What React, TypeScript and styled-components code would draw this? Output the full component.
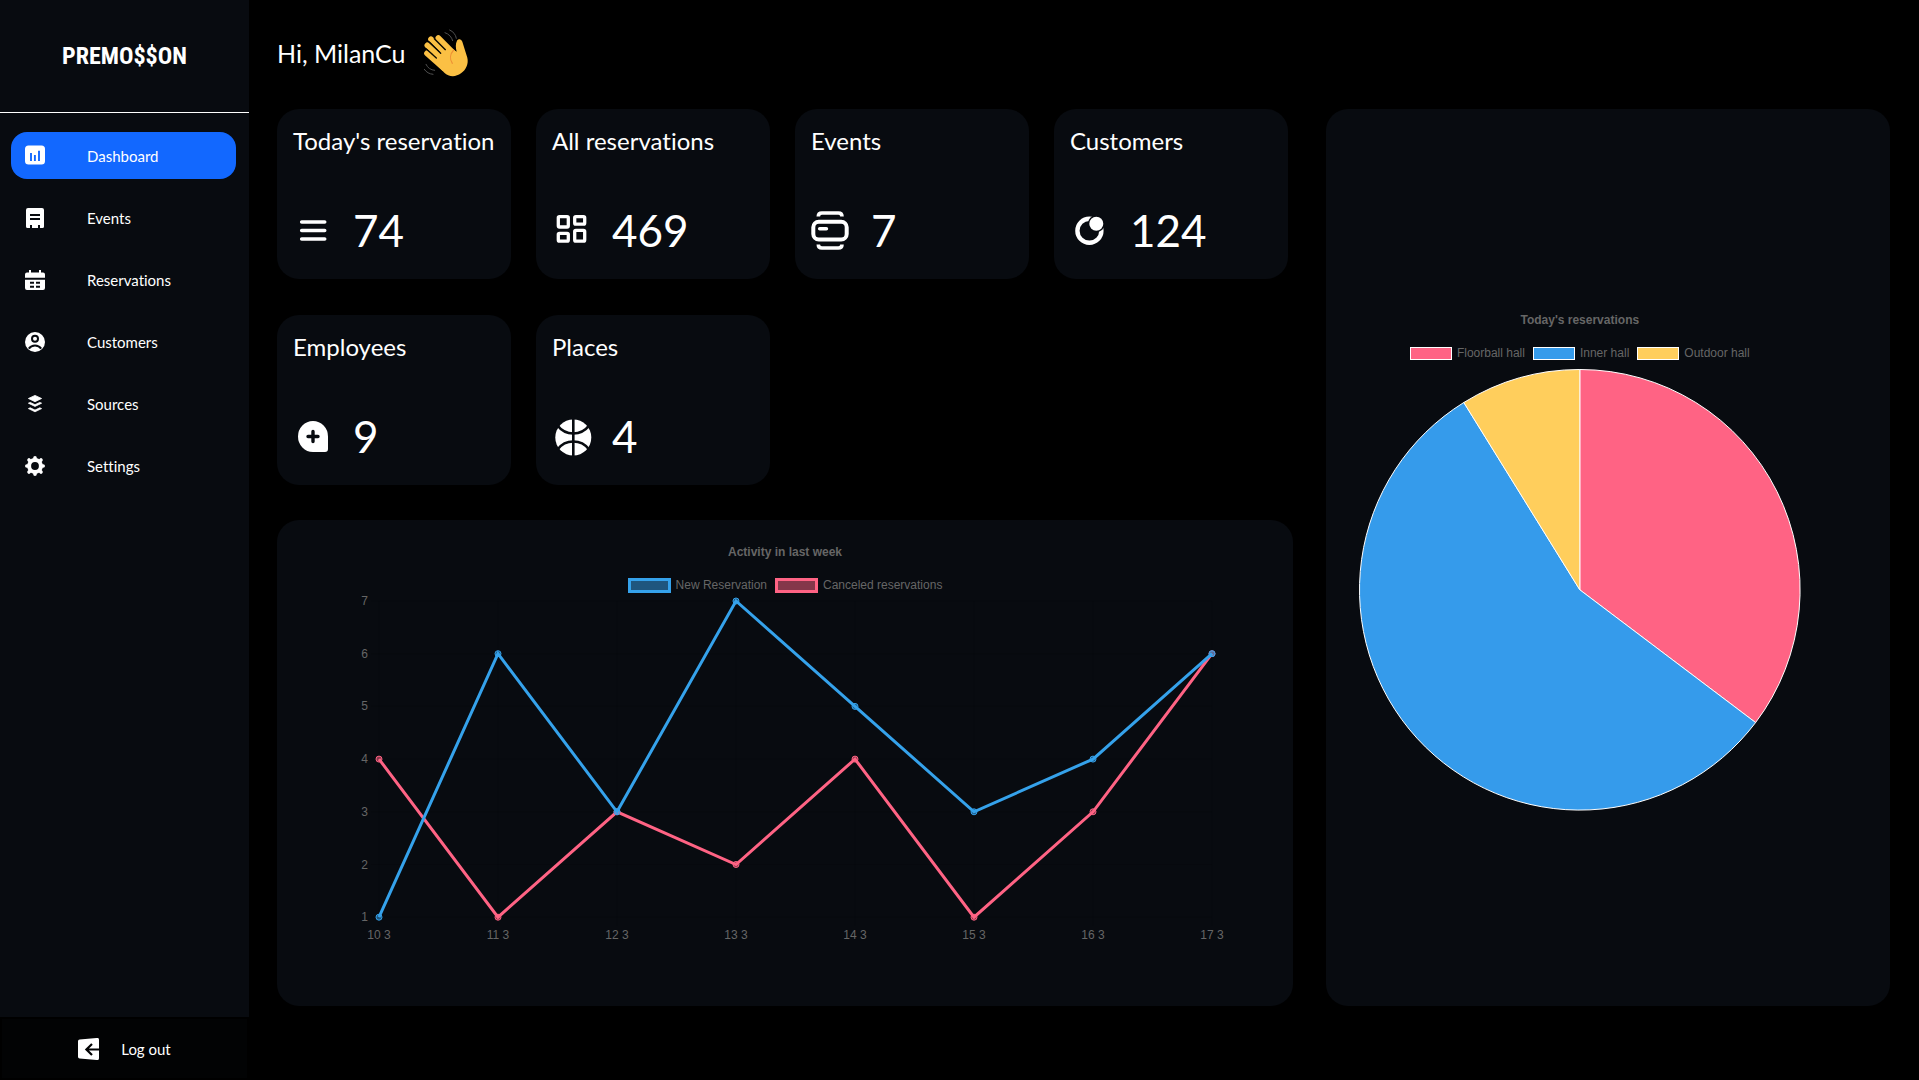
import React from "react";
import styled, { createGlobalStyle } from "styled-components";

const color = {
  page: "#000000",
  panel: "#080b10",
  accent: "#1268ff",
  text: "#ffffff",
  muted: "#666666",
  blue: "rgb(53, 162, 235)",
  pink: "rgb(255, 99, 132)",
};

const GlobalStyle = createGlobalStyle`
  *, *::before, *::after { box-sizing: border-box; }
  body {
    margin: 0;
    background: ${color.page};
    color: ${color.text};
    font-family: Lato, "Open Sans", sans-serif;
    font-variant-ligatures: none;
  }
`;

/* ---------- layout ---------- */

const Page = styled.div`
  display: flex;
  min-height: 100vh;
`;

const Sidebar = styled.aside`
  display: flex;
  flex-direction: column;
  flex: none;
  width: 249px;
  background: ${color.panel};
`;

const Brand = styled.div`
  display: flex;
  align-items: center;
  justify-content: center;
  height: 113px;
  border-bottom: 1px solid #fff;
  font-family: "Liberation Sans Narrow", "Roboto Condensed", "DejaVu Sans Condensed", sans-serif;
  font-size: 24px;
  font-weight: 700;
  line-height: 28px;
`;

const Nav = styled.nav`
  display: flex;
  flex-direction: column;
  flex: 1;
  gap: 15px;
  padding: 19px 13px 19px 11px;
`;

const NavLink = styled.a<{ $active?: boolean }>`
  display: flex;
  align-items: center;
  gap: 42px;
  height: 47px;
  padding: 0 14px;
  border-radius: 16px;
  background: ${(p) => (p.$active ? color.accent : "transparent")};
  color: ${color.text};
  font-size: 15px;
  line-height: 20px;
  text-decoration: none;
`;

const NavIcon = styled.svg`
  flex: none;
  width: 20px;
  height: 20px;
  overflow: visible;
`;

const LogoutButton = styled.button`
  display: flex;
  align-items: center;
  justify-content: center;
  gap: 22px;
  height: 63px;
  border: 2px solid #000;
  background: #020304;
  color: ${color.text};
  font-family: inherit;
  font-size: 15px;
  line-height: 20px;
  cursor: pointer;
`;

const LogoutIcon = styled.svg`
  width: 21px;
  height: 22px;
`;

const Main = styled.main`
  flex: 1;
  min-width: 0;
  padding: 0 29px 74px 28px;
`;

const Greeting = styled.header`
  display: flex;
  align-items: center;
  gap: 18px;
  height: 109px;
  padding-bottom: 4px;
`;

const GreetingText = styled.h1`
  margin: 0;
  font-size: 25px;
  font-weight: 400;
  line-height: 32px;
`;

const WaveIcon = styled.svg`
  width: 46px;
  height: 50px;
`;

const Board = styled.div`
  display: grid;
  grid-template-columns: minmax(0, 1016fr) minmax(0, 564fr);
  gap: 33px;
`;

const Overview = styled.div`
  display: flex;
  flex-direction: column;
  gap: 35px;
`;

const StatGrid = styled.section`
  display: grid;
  grid-template-columns: repeat(4, minmax(0, 1fr));
  gap: 36px 25px;
  padding-right: 5px;
`;

/* ---------- stat cards ---------- */

const StatCard = styled.article`
  display: flex;
  flex-direction: column;
  justify-content: space-between;
  min-height: 170px;
  padding: 18px 16px 25px;
  border-radius: 22px;
  background: ${color.panel};
`;

const StatTitle = styled.h2`
  margin: 0;
  font-size: 24px;
  font-weight: 400;
  line-height: 28px;
  white-space: nowrap;
`;

const StatRow = styled.div`
  display: flex;
  align-items: center;
  gap: 20px;
`;

const StatIcon = styled.svg`
  flex: none;
  width: 40px;
  height: 40px;
`;

const StatValue = styled.span`
  font-size: 44px;
  line-height: 48px;
`;

/* ---------- charts ---------- */

const Panel = styled.section`
  border-radius: 22px;
  background: ${color.panel};
  color: ${color.muted};
  font-family: "Liberation Sans", Arial, sans-serif;
  font-size: 12px;
  line-height: 16px;
`;

const ActivityPanel = styled(Panel)`
  padding: 24px 68px 58px;
`;

const PiePanel = styled(Panel)`
  display: flex;
  align-items: center;
`;

const PieArea = styled.div`
  display: flex;
  flex-direction: column;
  align-items: center;
  width: 90%;
  padding-top: 8px;
`;

const ChartTitle = styled.h3`
  margin: 0 0 17px;
  font-size: 12px;
  font-weight: 700;
  line-height: 16px;
  text-align: center;
`;

const Legend = styled.ul`
  display: flex;
  flex-wrap: wrap;
  justify-content: center;
  gap: 8px;
  margin: 0;
  padding: 0;
  list-style: none;
`;

const LegendItem = styled.li`
  display: flex;
  align-items: center;
  gap: 5px;
`;

const Swatch = styled.span<{ $fill: string; $line: string; $thick?: boolean }>`
  width: ${(p) => (p.$thick ? 43 : 42)}px;
  height: ${(p) => (p.$thick ? 15 : 13)}px;
  border: ${(p) => (p.$thick ? 3 : 1)}px solid ${(p) => p.$line};
  background: ${(p) => p.$fill};
`;

const LinePlot = styled.svg`
  display: block;
  width: 100%;
  height: auto;
  overflow: visible;
`;

const AxisLabel = styled.text`
  fill: ${color.muted};
  font-size: 12px;
`;

const PiePlot = styled.svg`
  display: block;
  width: 87%;
  height: auto;
  margin-top: 8px;
`;

/* ---------- icons ---------- */

const DashboardIcon = () => (
  <NavIcon viewBox="0 0 20 20" aria-hidden="true">
    <rect y="-0.5" width="20" height="19" rx="3.5" fill="#fff" />
    <path d="M6 7v8M9.900 9v6M14 4.800v10.200" stroke={color.accent} strokeWidth="1.900" />
  </NavIcon>
);

const EventsIcon = () => (
  <NavIcon viewBox="0 0 20 20" aria-hidden="true">
    <path
      fill="#fff"
      fillRule="evenodd"
      d="M3 0h14a2 2 0 0 1 2 2v16.500a1.500 1.500 0 0 1-1.500 1.500H15v-3h-2v3H7v-3H5v3H2.500A1.500 1.500 0 0 1 1 18.500V2a2 2 0 0 1 2-2zM5 6v2h10V6zM5 10v2h10v-2z"
    />
  </NavIcon>
);

const CalendarIcon = () => (
  <NavIcon viewBox="0 0 20 20" aria-hidden="true">
    <path
      fill="#fff"
      fillRule="evenodd"
      d="M4 0h2v2.500h8V0h2v2.500h2a2 2 0 0 1 2 2V7.700H0V4.500a2 2 0 0 1 2-2h2zM0 9.700h20V18a2 2 0 0 1-2 2H2a2 2 0 0 1-2-2zM5 11.700v2h4v-2zM11 11.700v2h4v-2zM5 15.700v2h4v-2zM11 15.700v2h4v-2z"
    />
  </NavIcon>
);

const UserIcon = () => (
  <NavIcon viewBox="0 0 20 20" aria-hidden="true">
    <circle cx="10" cy="10" r="10" fill="#fff" />
    <circle cx="10" cy="6.800" r="3" fill="none" stroke={color.panel} strokeWidth="2" />
    <path d="M3.800 16.600c3-4.200 9.400-4.200 12.400 0" fill="none" stroke={color.panel} strokeWidth="2" />
  </NavIcon>
);

const LayersIcon = () => (
  <NavIcon viewBox="0 0 20 20" aria-hidden="true">
    <g fill="#fff" stroke="#fff" strokeWidth="0.8" strokeLinejoin="round">
      <path d="M10 1.400l6.600 3.100L10 7.700 3.400 4.500z" />
      <path d="M3.400 9.200l1.800-.8 4.800 2.300 4.800-2.300 1.800.8-6.600 3.200z" />
      <path d="M3.400 14.600l1.800-.8 4.800 2.300 4.800-2.300 1.800.8-6.600 3.200z" />
    </g>
  </NavIcon>
);

const GearIcon = () => (
  <NavIcon viewBox="0 0 20 20" aria-hidden="true">
    <g fill="none" stroke="#fff">
      <circle cx="10" cy="10" r="5.900" strokeWidth="4" />
      <path
        strokeWidth="3.600"
        strokeLinecap="round"
        d="M10 1.800v1.500M10 16.700v1.500M1.800 10h1.500M16.700 10h1.500M4 4l1 1M15 15l1 1M4 16l1-1M15 5l1-1"
      />
    </g>
  </NavIcon>
);

const ListGlyph = () => (
  <StatIcon viewBox="0 0 40 40" aria-hidden="true">
    <path d="M8.700 12h23M8.700 20.500h23M8.700 29h23" stroke="#fff" strokeWidth="3.600" strokeLinecap="round" />
  </StatIcon>
);

const TilesGlyph = () => (
  <StatIcon viewBox="0 0 40 40" aria-hidden="true">
    <g fill="none" stroke="#fff" strokeWidth="3.300">
      <rect x="6.300" y="6.600" width="10" height="10.400" rx="1.200" />
      <rect x="22.700" y="6.600" width="10" height="7.600" rx="1.200" />
      <rect x="6.300" y="23.300" width="10" height="7.800" rx="1.200" />
      <rect x="22.700" y="20.400" width="10" height="10.700" rx="1.200" />
    </g>
  </StatIcon>
);

const StackGlyph = () => (
  <StatIcon viewBox="0 0 40 40" aria-hidden="true">
    <g fill="none" stroke="#fff">
      <rect x="2.300" y="11.700" width="33.400" height="17.800" rx="5.500" strokeWidth="4" />
      <path d="M8.700 18.700h6.700" strokeWidth="3.600" strokeLinecap="round" />
      <path
        strokeWidth="3.600"
        d="M7.300 6.600c0-2.400 1.300-3.600 3.600-3.600h16.500c2.300 0 3.600 1.200 3.600 3.600M7.300 34.400c0 2.400 1.300 3.600 3.600 3.600h16.500c2.300 0 3.600-1.200 3.600-3.600"
      />
    </g>
  </StatIcon>
);

const OrbitGlyph = () => (
  <StatIcon viewBox="0 0 40 40" aria-hidden="true">
    <circle cx="19.400" cy="20.700" r="12" fill="none" stroke="#fff" strokeWidth="4.400" />
    <circle cx="26.300" cy="13.700" r="8.400" fill={color.panel} />
    <circle cx="26.300" cy="13.700" r="7" fill="#fff" />
  </StatIcon>
);

const AddGlyph = () => (
  <StatIcon viewBox="0 0 40 40" aria-hidden="true">
    <path fill="#fff" d="M20 5a15 15.500 0 0 1 15 15.500V33a3 3 0 0 1-3 3H20A15 15.500 0 0 1 20 5z" />
    <path d="M15 20.500h10M20 15.500v10" stroke={color.panel} strokeWidth="3.400" strokeLinecap="round" />
  </StatIcon>
);

const BallGlyph = () => (
  <StatIcon viewBox="0 0 40 40" aria-hidden="true">
    <circle cx="21.300" cy="21.500" r="18" fill="#fff" />
    <g fill="none" stroke={color.panel}>
      <path d="M21.300 2v38" strokeWidth="2.600" />
      <path d="M5.500 9.500c8 10.600 23.600 10.600 31.600 0M5.500 33.500c8-10.600 23.600-10.600 31.600 0" strokeWidth="2.600" />
    </g>
  </StatIcon>
);

const Wave = () => (
  <WaveIcon viewBox="72 54 138 150" role="img" aria-label="waving hand">
    <g stroke="#fbc044" strokeWidth="17" strokeLinecap="round">
      <path d="M84 130l50 44M85 106l60 54M96 88l58 56M118 84l50 50" />
    </g>
    <path
      fill="#fbc044"
      d="M96 146l40 42c13 13 34 14 50 2 16-12 23-29 19-47L190 95c-3-9-12-10-16-3-5 10-4 20-1 33l-18-12-50 18z"
    />
    <g fill="none" strokeLinecap="round">
      <path d="M82 117l30 27M91 96l34 34M106 86l33 33" stroke="#0b0900" strokeWidth="4" />
      <path d="M164 120c-11 12-12 28-4 40" stroke="#ee8f35" strokeWidth="3.500" />
      <path
        d="M138 68c12 4 20 13 23 24M152 60c11 5 18 13 20 25M81 163c5 11 14 17 26 18M76 178c6 9 15 14 26 15"
        stroke="#505050"
        strokeWidth="3"
      />
    </g>
  </WaveIcon>
);

/* ---------- data ---------- */

const navItems = [
  { label: "Dashboard", Icon: DashboardIcon, active: true },
  { label: "Events", Icon: EventsIcon },
  { label: "Reservations", Icon: CalendarIcon },
  { label: "Customers", Icon: UserIcon },
  { label: "Sources", Icon: LayersIcon },
  { label: "Settings", Icon: GearIcon },
];

const stats = [
  { title: "Today's reservation", value: 74, Icon: ListGlyph },
  { title: "All reservations", value: 469, Icon: TilesGlyph },
  { title: "Events", value: 7, Icon: StackGlyph },
  { title: "Customers", value: 124, Icon: OrbitGlyph },
  { title: "Employees", value: 9, Icon: AddGlyph },
  { title: "Places", value: 4, Icon: BallGlyph },
];

const days = ["10 3", "11 3", "12 3", "13 3", "14 3", "15 3", "16 3", "17 3"];

const series = [
  { label: "New Reservation", line: color.blue, fill: "rgba(53, 162, 235, 0.5)", data: [1, 6, 3, 7, 5, 3, 4, 6] },
  { label: "Canceled reservations", line: color.pink, fill: "rgba(255, 99, 132, 0.5)", data: [4, 1, 3, 2, 4, 1, 3, 6] },
];

const halls = [
  { label: "Floorball hall", fill: "#ff6384", count: 12 },
  { label: "Inner hall", fill: "#359beb", count: 19 },
  { label: "Outdoor hall", fill: "#ffce5c", count: 3 },
];

const px = (i: number) => 34 + i * 119;
const py = (v: number) => 8 + (7 - v) * 52.7;

function ActivityChart() {
  return (
    <ActivityPanel>
      <ChartTitle>Activity in last week</ChartTitle>
      <Legend>
        {series.map((s) => (
          <LegendItem key={s.label}>
            <Swatch $thick $fill={s.fill} $line={s.line} />
            {s.label}
          </LegendItem>
        ))}
      </Legend>
      <LinePlot viewBox="0 0 880 355" role="img" aria-label="Activity in last week">
        <g stroke="#000" strokeOpacity="0.1">
          {days.map((d, i) => (
            <path key={d} d={`M${px(i)} ${py(7)}V${py(1) + 8}`} />
          ))}
          {[1, 2, 3, 4, 5, 6, 7].map((v) => (
            <path key={v} d={`M${px(0) - 8} ${py(v)}H${px(7)}`} />
          ))}
        </g>
        {[1, 2, 3, 4, 5, 6, 7].map((v) => (
          <AxisLabel key={v} x={23} y={py(v) + 4} textAnchor="end">
            {v}
          </AxisLabel>
        ))}
        {days.map((d, i) => (
          <AxisLabel key={d} x={px(i)} y={346} textAnchor="middle">
            {d}
          </AxisLabel>
        ))}
        {[...series].reverse().map((s) => (
          <g key={s.label} stroke={s.line}>
            <polyline
              fill="none"
              strokeWidth="3"
              points={s.data.map((v, i) => `${px(i)},${py(v)}`).join(" ")}
            />
            {s.data.map((v, i) => (
              <circle key={i} cx={px(i)} cy={py(v)} r="3" fill={s.fill} />
            ))}
          </g>
        ))}
      </LinePlot>
    </ActivityPanel>
  );
}

function HallsChart() {
  const total = halls.reduce((sum, h) => sum + h.count, 0);
  const point = (t: number) => {
    const a = t * 2 * Math.PI;
    return `${221 + 220.5 * Math.sin(a)} ${221 - 220.5 * Math.cos(a)}`;
  };
  let start = 0;
  return (
    <PiePanel>
      <PieArea>
        <ChartTitle>Today's reservations</ChartTitle>
        <Legend>
          {halls.map((h) => (
            <LegendItem key={h.label}>
              <Swatch $fill={h.fill} $line="#fff" />
              {h.label}
            </LegendItem>
          ))}
        </Legend>
        <PiePlot viewBox="0 0 442 442" role="img" aria-label="Today's reservations by hall">
          {halls.map((h) => {
            const from = start / total;
            start += h.count;
            const to = start / total;
            const large = to - from > 0.5 ? 1 : 0;
            return (
              <path
                key={h.label}
                d={`M221 221L${point(from)}A220.5 220.5 0 ${large} 1 ${point(to)}Z`}
                fill={h.fill}
                stroke="#fff"
                strokeLinejoin="round"
              />
            );
          })}
        </PiePlot>
      </PieArea>
    </PiePanel>
  );
}

export default function App() {
  return (
    <Page>
      <GlobalStyle />
      <Sidebar>
        <Brand>PREMO$$ON</Brand>
        <Nav>
          {navItems.map(({ label, Icon, active }) => (
            <NavLink key={label} href="#" $active={active}>
              <Icon />
              {label}
            </NavLink>
          ))}
        </Nav>
        <LogoutButton type="button">
          <LogoutIcon viewBox="0 0 21 22" aria-hidden="true">
            <path
              fill="#fff"
              d="M1.600 1.600L18.600 0a2 2 0 0 1 2.400 2v18a2 2 0 0 1-2.400 2L1.600 20.400A1.800 1.800 0 0 1 0 18.600V3.400a1.800 1.800 0 0 1 1.600-1.800z"
            />
            <path d="M21 11.500H8.500M14 6l-5.600 5.500L14 17" fill="none" stroke="#020304" strokeWidth="2.200" />
          </LogoutIcon>
          Log out
        </LogoutButton>
      </Sidebar>
      <Main>
        <Greeting>
          <GreetingText>Hi, MilanCu</GreetingText>
          <Wave />
        </Greeting>
        <Board>
          <Overview>
            <StatGrid>
              {stats.map(({ title, value, Icon }) => (
                <StatCard key={title}>
                  <StatTitle>{title}</StatTitle>
                  <StatRow>
                    <Icon />
                    <StatValue>{value}</StatValue>
                  </StatRow>
                </StatCard>
              ))}
            </StatGrid>
            <ActivityChart />
          </Overview>
          <HallsChart />
        </Board>
      </Main>
    </Page>
  );
}
